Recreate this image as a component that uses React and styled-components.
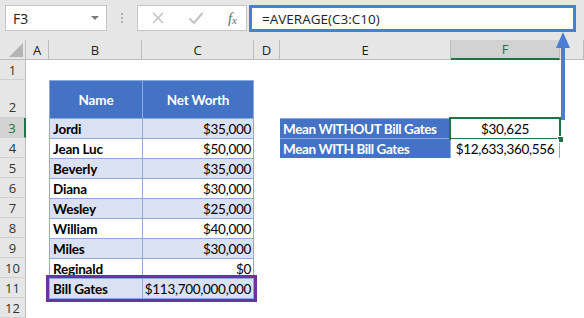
import React from "react";
import styled, { createGlobalStyle } from "styled-components";

const GlobalStyle = createGlobalStyle`
  html, body {
    margin: 0;
    padding: 0;
    background: #ffffff;
  }
  body {
    font-family: "Open Sans", "Liberation Sans", sans-serif;
  }
`;

const netWorth = [
  { name: "Jordi", value: "$35,000" },
  { name: "Jean Luc", value: "$50,000" },
  { name: "Beverly", value: "$35,000" },
  { name: "Diana", value: "$30,000" },
  { name: "Wesley", value: "$25,000" },
  { name: "William", value: "$40,000" },
  { name: "Miles", value: "$30,000" },
  { name: "Reginald", value: "$0" },
  { name: "Bill Gates", value: "$113,700,000,000", outlined: true },
];

const columns = ["A", "B", "C", "D", "E", "F", ""];

const App = () => {
  return (
    <Page>
      <GlobalStyle />
      <Toolbar>
        <NameBox>
          <span>F3</span>
          <svg width="10" height="6" viewBox="0 0 10 6">
            <path d="M1 1h8L5 5z" fill="#7a7a7a" />
          </svg>
        </NameBox>
        <Grip>
          <i />
          <i />
          <i />
        </Grip>
        <FxButtons>
          <svg width="14" height="14" viewBox="0 0 14 14">
            <path d="M2 2l10 10M12 2L2 12" stroke="#c4c4c4" strokeWidth="1.6" />
          </svg>
          <svg width="16" height="14" viewBox="0 0 16 14">
            <path d="M1.5 7.5l4.5 4.5 8.5-10" stroke="#c4c4c4" strokeWidth="2.2" fill="none" />
          </svg>
          <FxLabel>
            f<sub>x</sub>
          </FxLabel>
        </FxButtons>
        <FormulaBox>=AVERAGE(C3:C10)</FormulaBox>
      </Toolbar>

      <Sheet>
        <Corner>
          <svg width="14" height="14" viewBox="0 0 14 14">
            <path d="M14 0v14H0z" fill="#b5b5b5" />
          </svg>
        </Corner>
        {columns.map((c, i) => (
          <ColHeader key={i} $active={c === "F"}>
            {c}
          </ColHeader>
        ))}
        {Array.from({ length: 12 }, (_, i) => (
          <RowHeader key={i} $active={i === 2} $tall={i === 1}>
            {i + 1}
          </RowHeader>
        ))}

        <Table>
          <HeadCell>Name</HeadCell>
          <HeadCell>Net Worth</HeadCell>
          {netWorth.map((row, i) => (
            <TableRow key={row.name} $band={i % 2 === 0} $outlined={row.outlined}>
              <NameCell>{row.name}</NameCell>
              <ValueCell>{row.value}</ValueCell>
            </TableRow>
          ))}
        </Table>

        <MeanBox>
          <LabelCell>Mean WITHOUT Bill Gates</LabelCell>
          <ResultCell $selected>
            $30,625
            <Handle />
          </ResultCell>
          <LabelCell>Mean WITH Bill Gates</LabelCell>
          <ResultCell>$12,633,360,556</ResultCell>
        </MeanBox>
      </Sheet>

      <Arrow width="20" height="92" viewBox="0 0 20 92">
        <path d="M10 88V14" stroke="#4a7ed1" strokeWidth="4" />
        <path d="M10 0L17 16H3z" fill="#4a7ed1" />
      </Arrow>
    </Page>
  );
};

const Page = styled.div`
  position: relative;
  width: 584px;
  height: 318px;
  overflow: hidden;
  background: #ffffff;
`;

const Toolbar = styled.div`
  display: flex;
  align-items: flex-start;
  height: 40px;
  box-sizing: border-box;
  padding: 5px 8px 0 5px;
  background: #e6e6e6;
`;

const NameBox = styled.div`
  display: flex;
  align-items: center;
  justify-content: space-between;
  width: 102px;
  height: 26px;
  box-sizing: border-box;
  padding: 0 6px 0 7px;
  background: #ffffff;
  border: 1px solid #c6c6c6;
  font-family: "Open Sans", sans-serif;
  font-size: 14px;
  color: #222;
`;

const Grip = styled.div`
  display: flex;
  flex-direction: column;
  align-items: center;
  gap: 2px;
  width: 30px;
  padding-top: 8px;

  i {
    width: 2px;
    height: 2px;
    background: #b0b0b0;
  }
`;

const FxButtons = styled.div`
  display: flex;
  align-items: center;
  justify-content: space-between;
  width: 110px;
  height: 26px;
  box-sizing: border-box;
  padding: 0 9px 0 13px;
  background: #ffffff;
  border: 1px solid #c6c6c6;
`;

const FxLabel = styled.span`
  font-family: "Liberation Serif", serif;
  font-style: italic;
  font-size: 15px;
  color: #6a6a6a;
  line-height: 1;

  sub {
    font-size: 11px;
    vertical-align: -1px;
  }
`;

const FormulaBox = styled.div`
  flex: 1;
  margin-left: 2px;
  height: 27px;
  box-sizing: border-box;
  padding: 0 0 0 10px;
  display: flex;
  align-items: center;
  background: #ffffff;
  border: 3px solid #4a7ed1;
  font-family: "Open Sans", sans-serif;
  font-size: 13.5px;
  color: #222;
`;

const Sheet = styled.div`
  display: grid;
  grid-template-columns: 26px 23px 93px 112px 26px 171px 109px 1fr;
  grid-template-rows: 20px 20px 38px repeat(10, 20px);
  grid-auto-flow: column;
`;

const Corner = styled.div`
  grid-column: 1;
  grid-row: 1;
  display: flex;
  align-items: flex-end;
  justify-content: flex-end;
  padding: 0 2px 2px 0;
  background: #e6e6e6;
  border-right: 1px solid #bdbdbd;
  border-bottom: 1px solid #bdbdbd;
`;

const ColHeader = styled.div`
  grid-row: 1;
  display: flex;
  align-items: center;
  justify-content: center;
  background: ${(p) => (p.$active ? "#d2d2d2" : "#e6e6e6")};
  border-right: 1px solid #bdbdbd;
  border-bottom: ${(p) => (p.$active ? "2px solid #217346" : "1px solid #bdbdbd")};
  font-family: "Open Sans", sans-serif;
  font-size: 13px;
  color: ${(p) => (p.$active ? "#217346" : "#222")};
`;

const RowHeader = styled.div`
  grid-column: 1;
  display: flex;
  align-items: ${(p) => (p.$tall ? "flex-end" : "center")};
  justify-content: center;
  padding-bottom: ${(p) => (p.$tall ? "1px" : "0")};
  background: ${(p) => (p.$active ? "#d2d2d2" : "#e6e6e6")};
  border-right: ${(p) => (p.$active ? "2px solid #217346" : "1px solid #bdbdbd")};
  border-bottom: 1px solid #d0d0d0;
  font-family: "Open Sans", sans-serif;
  font-size: 13px;
  color: ${(p) => (p.$active ? "#217346" : "#333")};
`;

const Table = styled.div`
  grid-column: 3 / 5;
  grid-row: 3 / 13;
  align-self: start;
  display: grid;
  grid-template-columns: 92px 110px;
  grid-template-rows: 37px;
  grid-auto-rows: 19px;
  gap: 1px;
  padding: 1px;
  background: #8ea9db;
  font-family: "Lato", "Liberation Sans", sans-serif;
  font-size: 13.5px;
  white-space: nowrap;
`;

const HeadCell = styled.div`
  display: flex;
  align-items: center;
  justify-content: center;
  background: #4472c4;
  color: #ffffff;
  font-weight: 700;
  letter-spacing: -0.2px;
`;

const TableRow = styled.div`
  grid-column: 1 / 3;
  display: grid;
  grid-template-columns: 92px 110px;
  gap: 1px;
  background: #8ea9db;
  outline: ${(p) => (p.$outlined ? "3px solid #7030a0" : "none")};
  outline-offset: 1px;

  & > div {
    background: ${(p) => (p.$band ? "#d9e1f2" : "#ffffff")};
  }
`;

const NameCell = styled.div`
  display: flex;
  align-items: center;
  padding-left: 3px;
  font-weight: 700;
  letter-spacing: -0.2px;
  color: #000;
`;

const ValueCell = styled.div`
  display: flex;
  align-items: center;
  justify-content: flex-end;
  padding-right: 2px;
  letter-spacing: -0.3px;
  color: #000;
`;

const MeanBox = styled.div`
  grid-column: 6 / 8;
  grid-row: 4 / 6;
  display: grid;
  grid-template-columns: 170px 108px;
  grid-template-rows: 19px 19px;
  gap: 1px;
  padding: 1px 1px 1px 0;
  background: #8ea9db;
  font-family: "Lato", "Liberation Sans", sans-serif;
  font-size: 13.5px;
  white-space: nowrap;
`;

const LabelCell = styled.div`
  display: flex;
  align-items: center;
  padding-left: 3px;
  background: #4472c4;
  color: #ffffff;
  font-weight: 700;
  letter-spacing: -0.4px;
`;

const ResultCell = styled.div`
  position: relative;
  display: flex;
  align-items: center;
  justify-content: center;
  background: #ffffff;
  color: #000;
  letter-spacing: -0.3px;
  outline: ${(p) => (p.$selected ? "2px solid #217346" : "none")};
  outline-offset: 0;
`;

const Handle = styled.span`
  position: absolute;
  right: -5px;
  bottom: -5px;
  width: 5px;
  height: 5px;
  background: #217346;
  border: 1px solid #ffffff;
`;

const Arrow = styled.svg`
  position: absolute;
  left: 553px;
  top: 32px;
`;

export default App;
